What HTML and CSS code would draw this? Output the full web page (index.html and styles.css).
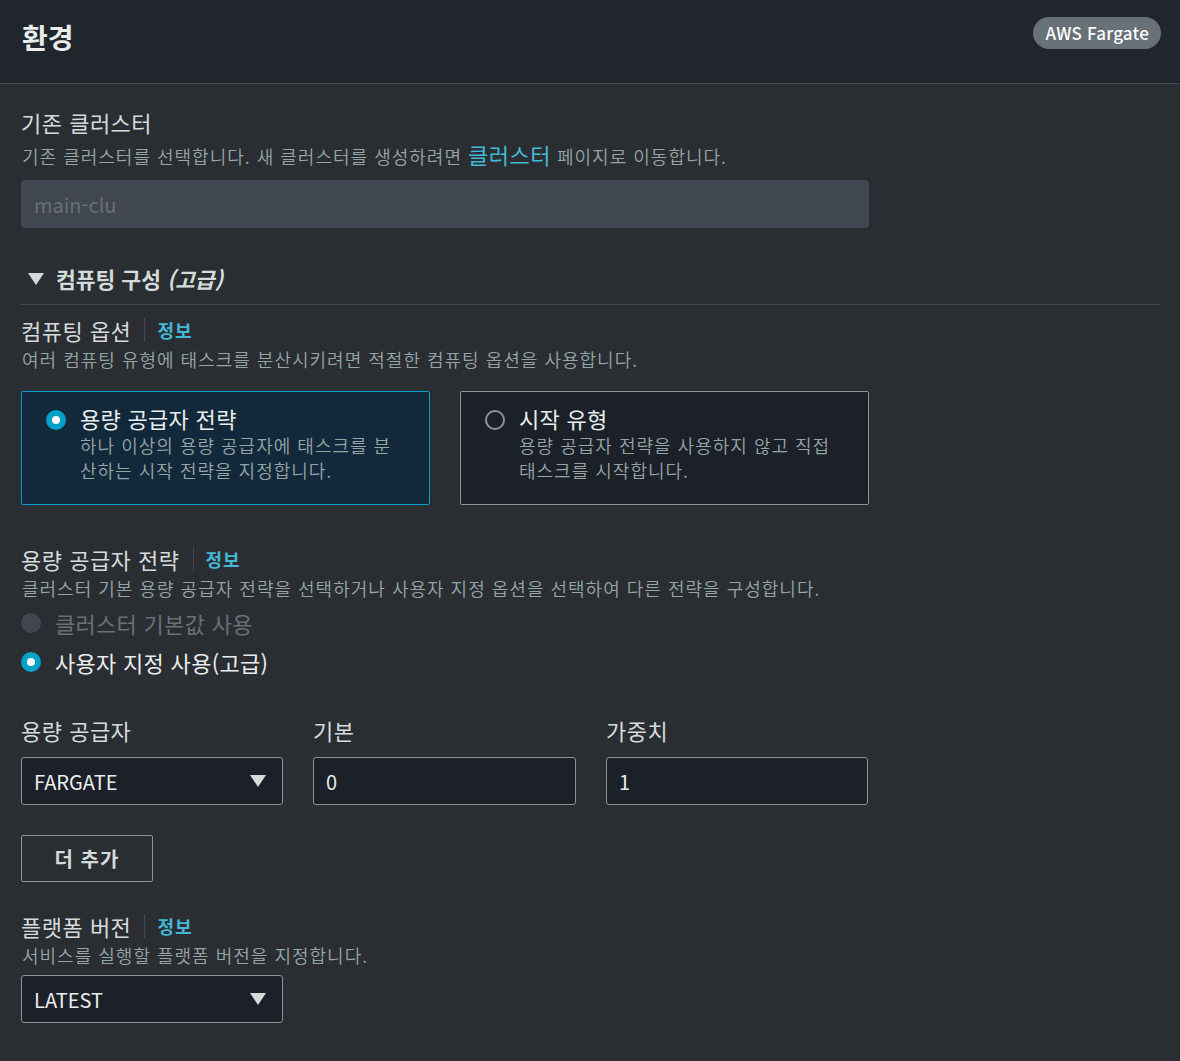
FILE: index.html
```html
<!DOCTYPE html>
<html lang="ko">
  <head>
    <meta charset="UTF-8" />
    <title>환경</title>
    <link rel="stylesheet" href="styles.css">
  </head>

  <body>
    <div class="header">
      <h2>환경</h2>
      <span class="badge">AWS Fargate</span>
    </div>

    <div class="content">
      <!-- 기존 클러스터 -->
      <div class="field">
        <div class="label">기존 클러스터</div>
        <div class="desc first">기존 클러스터를 선택합니다. 새 클러스터를 생성하려면 <a class="link" href="#">클러스터</a> 페이지로 이동합니다.</div>
        <div class="input disabled wide">main-clu</div>
      </div>

      <!-- 컴퓨팅 구성 -->
      <div class="expand">
        <span class="caret"></span>
        <span>컴퓨팅 구성 <em>(고급)</em></span>
      </div>

      <div class="field">
        <div class="label">컴퓨팅 옵션<span class="info">정보</span></div>
        <div class="desc">여러 컴퓨팅 유형에 태스크를 분산시키려면 적절한 컴퓨팅 옵션을 사용합니다.</div>
        <div class="tiles">
          <div class="tile selected">
            <span class="radio on"></span>
            <div>
              <div class="tile-title">용량 공급자 전략</div>
              <div class="tile-desc">하나 이상의 용량 공급자에 태스크를 분산하는 시작 전략을 지정합니다.</div>
            </div>
          </div>
          <div class="tile">
            <span class="radio"></span>
            <div>
              <div class="tile-title">시작 유형</div>
              <div class="tile-desc">용량 공급자 전략을 사용하지 않고 직접 태스크를 시작합니다.</div>
            </div>
          </div>
        </div>
      </div>

      <div class="field strategy">
        <div class="label">용량 공급자 전략<span class="info">정보</span></div>
        <div class="desc">클러스터 기본 용량 공급자 전략을 선택하거나 사용자 지정 옵션을 선택하여 다른 전략을 구성합니다.</div>
        <div class="options">
          <div class="option muted"><span class="radio off"></span>클러스터 기본값 사용</div>
          <div class="option"><span class="radio on"></span>사용자 지정 사용(고급)</div>
        </div>
      </div>

      <div class="grid">
        <div>
          <div class="label">용량 공급자</div>
          <div class="input select">FARGATE<span class="arrow"></span></div>
        </div>
        <div>
          <div class="label">기본</div>
          <div class="input">0</div>
        </div>
        <div>
          <div class="label">가중치</div>
          <div class="input">1</div>
        </div>
      </div>

      <button class="btn">더 추가</button>

      <div class="field">
        <div class="label">플랫폼 버전<span class="info">정보</span></div>
        <div class="desc">서비스를 실행할 플랫폼 버전을 지정합니다.</div>
        <div class="input select short">LATEST<span class="arrow"></span></div>
      </div>
    </div>
  </body>
</html>
```

FILE: styles.css
```css
body {
  margin: 0;
  padding: 0;
  background-color: #2a2e33;
  color: #d5dbdb;
  font-family: "Noto Sans CJK KR", "Noto Sans", sans-serif;
}

.header {
  height: 84px;
  box-sizing: border-box;
  padding: 0 19px 0 22px;
  display: flex;
  align-items: center;
  justify-content: space-between;
  background-color: #21252c;
  border-bottom: 1px solid #414750;
}

.header h2 {
  margin: 0 0 9px;
  font-size: 28px;
  font-weight: 700;
  color: #eaeded;
}

.badge {
  height: 32px;
  line-height: 32px;
  padding: 0 12px;
  margin-bottom: 17px;
  border-radius: 16px;
  background-color: #687078;
  color: #fff;
  font-size: 17px;
  font-weight: 500;
  letter-spacing: 0.2px;
}

.content {
  padding: 23px 20px 0 21px;
}

.label {
  display: flex;
  align-items: center;
  font-size: 22px;
  line-height: 30px;
  letter-spacing: 0.5px;
  color: #d5dbdb;
}

.info {
  margin-left: 13px;
  padding-left: 12px;
  border-left: 1px solid #414750;
  line-height: 24px;
  font-size: 18px;
  font-weight: 700;
  letter-spacing: 1px;
  color: #44b9d6;
}

.desc {
  font-size: 18px;
  font-weight: 350;
  line-height: 28px;
  letter-spacing: 1px;
  color: #95a5a6;
  margin-left: 1px;
}

.desc.first {
  margin-top: 5px;
}

.link {
  font-size: 22px;
  font-weight: 400;
  line-height: 1;
  letter-spacing: 0.5px;
  color: #44b9d6;
  text-decoration: none;
}

.input {
  height: 48px;
  box-sizing: border-box;
  padding: 0 12px;
  display: flex;
  align-items: center;
  font-size: 20px;
  color: #eaeded;
  background-color: #1b2029;
  border: 1px solid #879596;
  border-radius: 3px;
}

.input.disabled {
  border-color: #414750;
  background-color: #414750;
  color: #687078;
  margin-top: 10px;
}

.wide {
  width: 848px;
}

.select {
  justify-content: space-between;
  padding-right: 16px;
}

.arrow {
  width: 0;
  height: 0;
  border-left: 8px solid transparent;
  border-right: 8px solid transparent;
  border-top: 12px solid #d5dbdb;
}

.expand {
  display: flex;
  align-items: center;
  gap: 12px;
  margin-top: 35px;
  padding: 0 0 10px 7px;
  border-bottom: 1px solid #414750;
  font-size: 21.5px;
  font-weight: 700;
  color: #d5dbdb;
}

.expand em {
  font-style: italic;
}

.caret {
  width: 0;
  height: 0;
  border-left: 8px solid transparent;
  border-right: 8px solid transparent;
  border-top: 12px solid #d5dbdb;
}

.expand + .field {
  margin-top: 10px;
}

.tiles {
  display: flex;
  gap: 30px;
  margin-top: 18px;
}

.tile {
  width: 409px;
  height: 114px;
  box-sizing: border-box;
  padding: 13px 34px 13px 24px;
  display: flex;
  gap: 14px;
  background-color: #1b2029;
  border: 1px solid #879596;
  border-radius: 2px;
}

.tile.selected {
  background-color: #12293b;
  border-color: #00a1c9;
}

.tile .radio {
  margin-top: 5px;
}

.tile-title {
  font-size: 22px;
  line-height: 26px;
  letter-spacing: 0.3px;
  color: #eaeded;
}

.tile-desc {
  margin-top: 2px;
  font-size: 18px;
  font-weight: 350;
  line-height: 25px;
  letter-spacing: 1px;
  word-break: break-all;
  color: #95a5a6;
}

.radio {
  flex: none;
  width: 20px;
  height: 20px;
  box-sizing: border-box;
  border-radius: 50%;
  border: 2px solid #879596;
}

.radio.on {
  border: 6px solid #00a1c9;
  background-color: #fff;
}

.radio.off {
  border: none;
  background-color: #414750;
}

.strategy {
  margin-top: 39px;
}

.options {
  margin-top: 1px;
}

.option {
  display: flex;
  align-items: center;
  gap: 14px;
  height: 39px;
  font-size: 22px;
  letter-spacing: 0.3px;
  color: #eaeded;
}

.option.muted {
  color: #687078;
}

.grid {
  display: grid;
  grid-template-columns: 262px 263px 262px;
  gap: 30px;
  margin-top: 34px;
}

.grid .label {
  margin-bottom: 12px;
}

.btn {
  display: block;
  width: 132px;
  height: 47px;
  margin-top: 30px;
  background: transparent;
  border: 1px solid #879596;
  border-radius: 2px;
  font-family: inherit;
  font-size: 20px;
  font-weight: 700;
  letter-spacing: 1px;
  color: #d5dbdb;
}

.btn + .field {
  margin-top: 29px;
}

.short {
  width: 262px;
  margin-top: 6px;
}
```
